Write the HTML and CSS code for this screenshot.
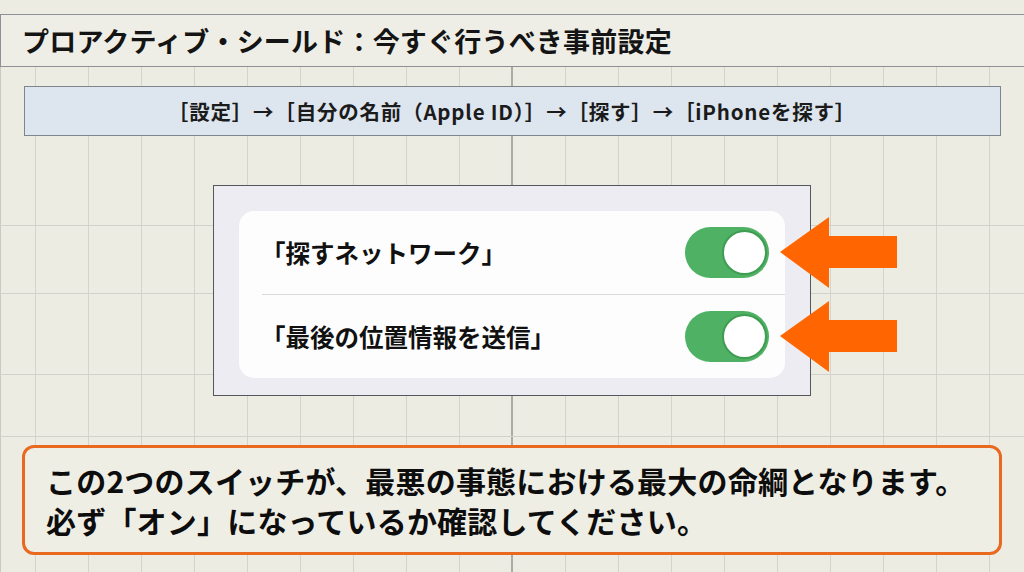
FILE: index.html
```html
<!DOCTYPE html>
<html lang="ja">
<head>
<meta charset="utf-8">
<link rel="stylesheet" href="styles.css">
</head>
<body>
<div class="page">
  <header class="title-bar">
    <h1 class="title">プロアクティブ・シールド：今すぐ行うべき事前設定</h1>
  </header>
  <main class="canvas">
    <div class="path-banner">［設定］→［自分の名前（Apple ID）］→［探す］→［iPhoneを探す］</div>
    <section class="settings-panel">
      <div class="settings-card">
        <div class="setting-row">
          <span class="setting-label">「探すネットワーク」</span>
          <span class="toggle"><span class="knob"></span></span>
        </div>
        <div class="setting-row">
          <span class="setting-label">「最後の位置情報を送信」</span>
          <span class="toggle"><span class="knob"></span></span>
        </div>
      </div>
      <svg class="arrow arrow-1" width="117" height="71" viewBox="0 0 117 71"><polygon points="0,35 49,0 49,19 117,19 117,51 49,51 49,71" fill="#ff6602"/></svg>
      <svg class="arrow arrow-2" width="117" height="71" viewBox="0 0 117 71"><polygon points="0,35 49,0 49,19 117,19 117,51 49,51 49,71" fill="#ff6602"/></svg>
    </section>
    <div class="note-box">
      <p class="note-line">この2つのスイッチが、最悪の事態における最大の命綱となります。</p>
      <p class="note-line">必ず「オン」になっているか確認してください。</p>
    </div>
  </main>
</div>
</body>
</html>
```

FILE: styles.css
```css
html, body {
  margin: 0;
  padding: 0;
}
body {
  width: 1024px;
  height: 572px;
  overflow: hidden;
  background: #edece3;
  font-family: "Noto Sans CJK JP", "Noto Sans", sans-serif;
  color: #141414;
}
.page {
  display: flex;
  flex-direction: column;
  height: 572px;
}
.title-bar {
  margin-top: 14px;
  height: 51px;
  width: 1020px;
  border: 1.5px solid #8e9295;
  background: #efeee6;
  display: flex;
  align-items: center;
  padding-left: 21px;
  box-sizing: content-box;
}
.title {
  margin: 0;
  font-size: 27px;
  font-weight: 700;
  letter-spacing: 0.2px;
  line-height: 1;
}
.canvas {
  flex: 1;
  display: flex;
  flex-direction: column;
  align-items: center;
  padding-top: 19px;
  background-color: #edece3;
  background-image:
    linear-gradient(#d2d2cc, #d2d2cc),
    linear-gradient(#d2d2cc, #d2d2cc),
    linear-gradient(#d2d2cc, #d2d2cc),
    linear-gradient(#d2d2cc, #d2d2cc),
    linear-gradient(#a9aba8, #a9aba8),
    linear-gradient(#c9cac5, #c9cac5),
    repeating-linear-gradient(90deg, transparent 0 35px, #d3d4ce 35px 36px, transparent 36px 53px);
  background-size:
    100% 1px, 100% 1px, 100% 1px, 100% 1px,
    2px 100%, 1px 100%, 100% 100%;
  background-position:
    0 158px, 0 226px, 0 307px, 0 369px,
    511px 0, 0 0, 0 0;
  background-repeat: no-repeat;
}
.path-banner {
  width: 975px;
  height: 48px;
  border: 1.5px solid #7e858c;
  background: #dde5ee;
  display: flex;
  align-items: center;
  justify-content: center;
  font-size: 20.5px;
  font-weight: 700;
  color: #1b1b1b;
  letter-spacing: 0.8px;
}
.settings-panel {
  position: relative;
  margin-top: 49px;
  width: 546px;
  padding: 25px 25px 17px 25px;
  background: #ececf2;
  border: 1px solid #55585b;
}
.settings-card {
  background: #fdfdfd;
  border-radius: 15px;
  display: flex;
  flex-direction: column;
  padding-left: 23px;
}
.setting-row {
  height: 83px;
  display: flex;
  align-items: center;
  justify-content: space-between;
  padding-right: 16px;
}
.setting-row + .setting-row {
  border-top: 1.5px solid #dadadc;
  height: 83px;
}
.setting-label {
  font-size: 24.5px;
  font-weight: 700;
  color: #111;
  margin-left: -1px;
}
.toggle {
  width: 84px;
  height: 51px;
  border-radius: 26px;
  background: #4fb163;
  display: flex;
  align-items: center;
  justify-content: flex-end;
  padding-right: 2px;
  box-sizing: border-box;
}
.knob {
  width: 45px;
  height: 45px;
  border-radius: 50%;
  background: #fff;
  box-sizing: border-box;
  border: 2px solid #3f9c52;
}
.arrow {
  position: absolute;
  left: 566px;
}
.arrow-1 {
  top: 31px;
}
.arrow-2 {
  top: 115px;
}
.note-box {
  margin-top: 49px;
  width: 953px;
  padding: 12px 0 12px 21px;
  border: 3px solid #e8691f;
  border-radius: 12px;
  background: #efeee5;
}
.note-line {
  margin: 0;
  font-size: 30px;
  font-weight: 700;
  line-height: 40px;
  letter-spacing: 0.2px;
  color: #0d0d0d;
}
```
